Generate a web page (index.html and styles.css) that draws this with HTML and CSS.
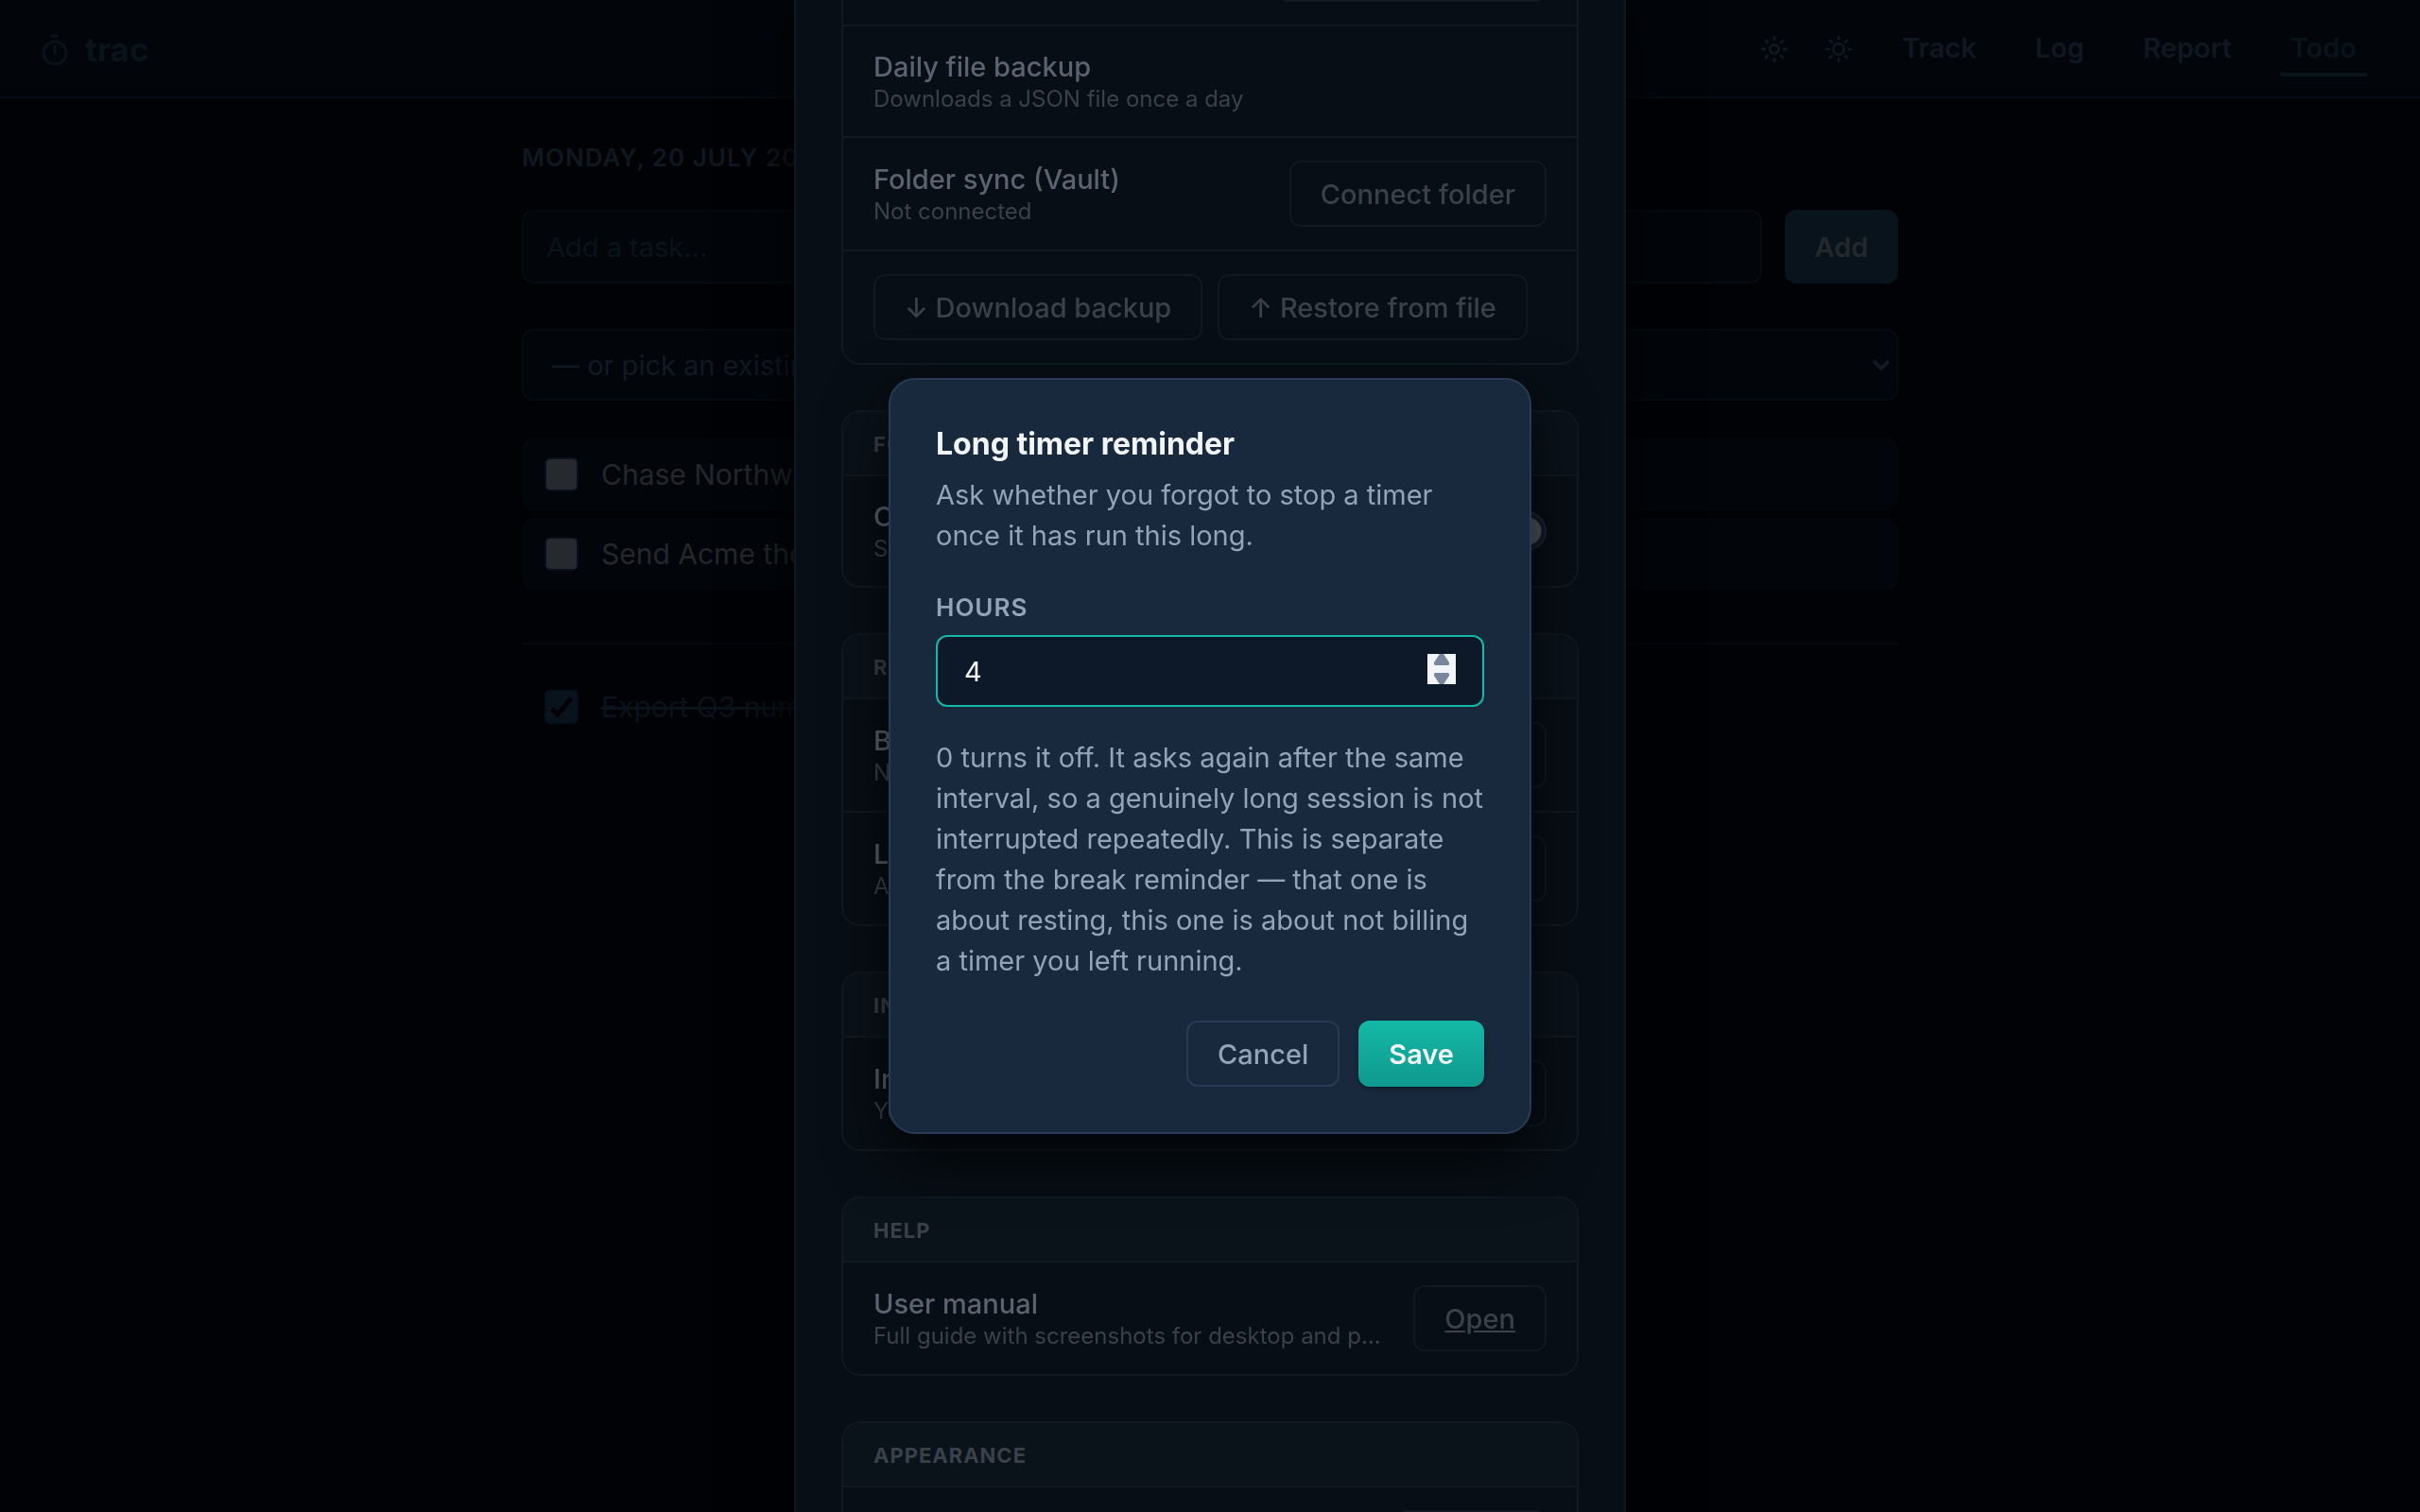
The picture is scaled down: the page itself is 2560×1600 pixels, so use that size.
FILE: index.html
```html
<!DOCTYPE html>
<html lang="en">
<head>
	<meta charset="utf-8">
	<meta name="viewport" content="width=device-width, initial-scale=1">
	<title>trac</title>
	<link rel="stylesheet" href="styles.css">
</head>
<body>
	<header class="topbar">
		<a href="#" class="brand">
			<svg class="brand-icon" viewBox="0 0 36 36" fill="none" stroke="currentColor" stroke-width="3" stroke-linecap="round"><circle cx="18" cy="22" r="12"/><path d="M18 15v7M15 4h6"/></svg>
			<span>trac</span>
		</a>
		<nav class="nav">
			<div class="nav-icons">
				<button class="icon-btn" aria-label="Settings">
					<svg viewBox="0 0 32 32" fill="none" stroke="currentColor" stroke-width="3" stroke-linecap="round"><circle cx="16" cy="16" r="4.6"/><path d="M16 3.2v2.6M16 26.2v2.6M3.2 16h2.6M26.2 16h2.6M7 7l2 2M23 23l2 2M7 25l2-2M23 9l2-2"/></svg>
				</button>
				<button class="icon-btn" aria-label="Theme">
					<svg viewBox="0 0 32 32" fill="none" stroke="currentColor" stroke-width="2.6" stroke-linecap="round"><circle cx="16" cy="16" r="5.8"/><path d="M16 3v2.6M16 26.4v2.6M3 16h2.6M26.4 16h2.6M7 7l2 2M23 23l2 2M7 25l2-2M23 9l2-2"/></svg>
				</button>
			</div>
			<a href="#" class="nav-link">Track</a>
			<a href="#" class="nav-link">Log</a>
			<a href="#" class="nav-link">Report</a>
			<a href="#" class="nav-link active">Todo</a>
		</nav>
	</header>

	<main class="page">
		<h1 class="date">Monday, 20 July 2026</h1>
		<form class="add-row">
			<input class="field" type="text" placeholder="Add a task..." aria-label="Add a task">
			<button class="btn-add" type="button">Add</button>
		</form>
		<div class="pick">
			<select class="field" aria-label="Pick an existing task"><option>— or pick an existing task —</option></select>
			<svg class="chevron" viewBox="0 0 20 12" fill="none" stroke="currentColor" stroke-width="4"><path d="M2 2l8 8 8-8"/></svg>
		</div>
		<ul class="tasks">
			<li><label class="task"><input type="checkbox"><span>Chase Northwind invoice</span></label></li>
			<li><label class="task"><input type="checkbox"><span>Send Acme the revised quote</span></label></li>
		</ul>
		<ul class="tasks done">
			<li><label class="task"><input type="checkbox" checked><span>Export Q3 numbers</span></label></li>
		</ul>
	</main>

	<!-- settings sheet, scrolled to the lower sections -->
	<div class="layer">
		<div class="sheet">
			<section class="card">
				<div class="row">
					<div class="row-text"><p class="row-title">Snapshots</p><p class="row-sub">Keeps the last 14 days</p></div>
					<button class="btn">View snapshots</button>
				</div>
				<div class="row">
					<div class="row-text"><p class="row-title">Daily file backup</p><p class="row-sub">Downloads a JSON file once a day</p></div>
				</div>
				<div class="row">
					<div class="row-text"><p class="row-title">Folder sync (Vault)</p><p class="row-sub">Not connected</p></div>
					<button class="btn">Connect folder</button>
				</div>
				<div class="row actions">
					<button class="btn">↓ Download backup</button>
					<button class="btn">↑ Restore from file</button>
				</div>
			</section>

			<section class="card">
				<h2 class="card-head">Focus</h2>
				<div class="row">
					<div class="row-text"><p class="row-title">Calm mode</p><p class="row-sub">Show fewer numbers</p></div>
					<input class="toggle" type="checkbox" aria-label="Calm mode" checked>
				</div>
			</section>

			<section class="card">
				<h2 class="card-head">Reminders</h2>
				<div class="row">
					<div class="row-text"><p class="row-title">Break reminder</p><p class="row-sub">Not set</p></div>
					<button class="btn">Change</button>
				</div>
				<div class="row">
					<div class="row-text"><p class="row-title">Long timer reminder</p><p class="row-sub">After 4 hours</p></div>
					<button class="btn">Change</button>
				</div>
			</section>

			<section class="card">
				<h2 class="card-head">Invoicing</h2>
				<div class="row">
					<div class="row-text"><p class="row-title">Invoice details</p><p class="row-sub">Your name and address</p></div>
					<button class="btn">Edit</button>
				</div>
			</section>

			<section class="card">
				<h2 class="card-head">Help</h2>
				<div class="row">
					<div class="row-text"><p class="row-title">User manual</p><p class="row-sub">Full guide with screenshots for desktop and phone</p></div>
					<a href="#" class="btn">Open</a>
				</div>
			</section>

			<section class="card">
				<h2 class="card-head">Appearance</h2>
				<div class="row">
					<div class="row-text"><p class="row-title">Theme</p><p class="row-sub">Dark</p></div>
					<button class="btn">Toggle</button>
				</div>
			</section>
		</div>
	</div>

	<div class="layer center">
		<form class="modal" role="dialog" aria-labelledby="modalTitle">
			<h2 class="modal-title" id="modalTitle">Long timer reminder</h2>
			<p class="modal-text">Ask whether you forgot to stop a timer once it has run this long.</p>
			<label class="modal-label" for="hours">Hours</label>
			<div class="number">
				<input id="hours" type="number" min="0" value="4">
				<svg class="spin" viewBox="0 0 30 32"><path fill="#f1f5f9" d="M0 0h30v32H0z"/><path fill="#77869b" d="M13 0h4l6 9v2l-1 1H8l-1-1V9zM13 32h4l6-9v-2l-1-1H8l-1 1v2z"/></svg>
			</div>
			<p class="modal-text">0 turns it off. It asks again after the same interval, so a genuinely long session is not interrupted repeatedly. This is separate from the break reminder — that one is about resting, this one is about not billing a timer you left running.</p>
			<div class="modal-actions">
				<button class="btn btn-cancel" type="button">Cancel</button>
				<button class="btn btn-save" type="button">Save</button>
			</div>
		</form>
	</div>
</body>
</html>
```
FILE: styles.css
```css
* { box-sizing: border-box; }

html, body { height: 100%; }

body {
	margin: 0;
	background: #010206;
	color: #24272b;
	font-family: Inter, "Liberation Sans", sans-serif;
	font-size: 29px;
	overflow: hidden;
}

h1, h2, p, ul { margin: 0; padding: 0; }
ul { list-style: none; }
button, input, select { font: inherit; color: inherit; margin: 0; }
button { cursor: pointer; }
svg { display: block; }

/* top bar */
.topbar {
	display: flex;
	align-items: center;
	justify-content: space-between;
	height: 104px;
	padding: 2px 56px 0 40px;
	background: #02060b;
	border-bottom: 2px solid #040c13;
}
.brand {
	display: flex;
	align-items: center;
	gap: 14px;
	color: #08131a;
	font-size: 35px;
	font-weight: 700;
	text-decoration: none;
}
.brand-icon { width: 36px; height: 36px; }
.nav { display: flex; align-items: center; gap: 40px; }
.nav-icons { display: flex; gap: 36px; }
.icon-btn {
	padding: 0;
	background: none;
	border: 0;
	color: #0f1821;
}
.icon-btn svg { width: 32px; height: 32px; }
.nav-link {
	padding: 9px 11px;
	border-bottom: 4px solid transparent;
	color: #0f1821;
	font-weight: 600;
	text-decoration: none;
}
.nav-link.active { color: #08131a; border-color: #08131a; }

/* todo page */
.page { max-width: 1520px; margin: 0 auto; padding: 48px 32px; }
.date {
	margin-bottom: 40px;
	color: #0f1821;
	font-size: 26px;
	line-height: 30px;
	font-weight: 600;
	letter-spacing: 1px;
	text-transform: uppercase;
}
.add-row { display: flex; gap: 24px; margin-bottom: 48px; }
.field {
	flex: 1;
	width: 100%;
	height: 78px;
	padding: 0 24px;
	background: #02060b;
	border: 2px solid #050b11;
	border-radius: 12px;
}
.field::placeholder { color: #08131a; opacity: 1; }
.btn-add {
	width: 120px;
	background: #09131b;
	border: 0;
	border-radius: 12px;
	color: #24282d;
	font-weight: 600;
}
.pick { position: relative; margin-bottom: 40px; color: #111a23; }
.pick .field { height: 76px; padding: 0 30px; appearance: none; }
.chevron { position: absolute; right: 8px; top: 32px; width: 20px; height: 12px; }
.tasks { display: flex; flex-direction: column; gap: 8px; }
.task {
	display: flex;
	align-items: center;
	gap: 24px;
	height: 76px;
	padding: 0 24px;
	background: #02060b;
	border-radius: 12px;
	font-size: 30px;
}
.task input {
	appearance: none;
	width: 36px;
	height: 36px;
	background: #26292d;
	border: 2px solid #07101a;
	border-radius: 6px;
}
.done { margin-top: 56px; padding-top: 28px; border-top: 2px solid #04080d; }
.done .task { background: none; color: #08131a; text-decoration: line-through; }
.done .task input {
	background: #09131c url("data:image/svg+xml,%3Csvg xmlns='http://www.w3.org/2000/svg' viewBox='0 0 32 32'%3E%3Cpath d='M6 18l6 6L26 7' fill='none' stroke='%23010206' stroke-width='5'/%3E%3C/svg%3E") center / 32px no-repeat;
}

/* overlays */
.layer { position: fixed; inset: 0; display: flex; justify-content: center; overflow: hidden; }
.center { align-items: center; }

.sheet {
	display: flex;
	flex-direction: column;
	justify-content: flex-end;
	flex-shrink: 0;
	gap: 48px;
	width: 880px;
	padding: 0 48px;
	background: #070e15;
	border: 2px solid #0f1822;
	border-width: 0 2px;
	box-shadow: 0 0 60px #000;
}
.card { flex-shrink: 0; border: 2px solid #101821; border-radius: 20px; overflow: hidden; }
.card:last-child { margin-bottom: -94px; }
.card-head {
	padding: 20px 32px 18px;
	background: #0a121a;
	color: #3a414a;
	font-size: 22px;
	line-height: 28px;
	font-weight: 700;
	letter-spacing: 1px;
	text-transform: uppercase;
}
.row {
	display: flex;
	align-items: center;
	justify-content: space-between;
	gap: 32px;
	padding: 24px 32px;
	border-top: 2px solid #101821;
}
.row-text { min-width: 0; }
.row-title { color: #5a636f; font-weight: 500; line-height: 38px; }
.row-sub {
	color: #3a414a;
	font-size: 24px;
	line-height: 30px;
	white-space: nowrap;
	overflow: hidden;
	text-overflow: ellipsis;
}
.actions { justify-content: flex-start; gap: 16px; }
.btn {
	flex-shrink: 0;
	padding: 16px 31px 14px;
	background: none;
	border: 2px solid #101821;
	border-radius: 12px;
	color: #3a414a;
	font-weight: 500;
	line-height: 36px;
}
.toggle {
	appearance: none;
	width: 76px;
	height: 42px;
	background: #121a26 radial-gradient(circle at 54px 19px, #4c525c 14px, transparent 15px);
	border: 2px solid #1c2632;
	border-radius: 21px;
}

/* reminder dialog */
.modal {
	width: 680px;
	padding: 48px;
	background: #18293e;
	border: 2px solid #293a54;
	border-radius: 28px;
	box-shadow: 0 24px 64px #000000b0;
	color: #94a3b8;
}
.modal-title { margin-bottom: 12px; color: #f1f5f9; font-size: 32px; line-height: 40px; font-weight: 700; }
.modal-text { line-height: 43px; }
.modal-label {
	display: block;
	margin: 40px 0 14px;
	font-size: 26px;
	line-height: 30px;
	font-weight: 600;
	letter-spacing: 1px;
	text-transform: uppercase;
}
.number { position: relative; margin-bottom: 32px; }
.number input {
	width: 100%;
	height: 76px;
	padding: 0 28px;
	background: #0d1929;
	border: 2px solid #14b8a6;
	border-radius: 12px;
	color: #f1f5f9;
	appearance: textfield;
}
.number input::-webkit-inner-spin-button { appearance: none; }
.spin { position: absolute; right: 30px; top: 20px; width: 30px; height: 32px; }
.modal-actions { display: flex; justify-content: flex-end; gap: 20px; margin-top: 42px; }
.btn-cancel { border-color: #293a54; color: #94a3b8; }
.btn-save {
	border: 0;
	padding: 18px 32px 16px;
	background: linear-gradient(#14b8a6, #0f998e);
	box-shadow: 0 2px 4px #0006;
	color: #f1f5f9;
	font-weight: 600;
}
```
